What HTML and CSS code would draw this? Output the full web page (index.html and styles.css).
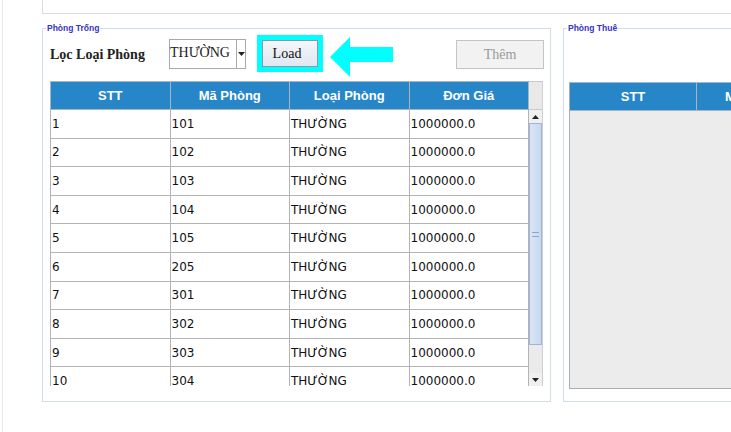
FILE: index.html
```html
<!DOCTYPE html>
<html lang="vi">
<head>
<meta charset="utf-8">
<title>Phòng</title>
<link rel="stylesheet" href="styles.css">
</head>
<body>
<div class="window">
  <div class="top-panel"></div>
  <div class="panels">
    <fieldset class="group group-left">
      <legend>Phòng Trống</legend>
      <div class="toolbar">
        <span class="filter-label">Lọc Loại Phòng</span>
        <div class="combo">
          <span class="combo-value">THƯỜNG</span>
          <span class="combo-btn"><svg width="7" height="4" viewBox="0 0 7 4"><path d="M0 0H7L3.5 4Z" fill="#222"/></svg></span>
        </div>
        <div class="load-focus"><button class="btn load">Load</button></div>
        <svg class="arrow" width="63" height="40" viewBox="0 0 63 40"><path d="M0 20L20 0V10H63V25H20V40Z" fill="#00ffff"/></svg>
        <button class="btn add" disabled>Thêm</button>
      </div>
      <div class="grid">
        <table class="data">
          <thead>
            <tr><th>STT</th><th>Mã Phòng</th><th>Loại Phòng</th><th>Đơn Giá</th></tr>
          </thead>
          <tbody>
            <tr><td>1</td><td>101</td><td>THƯỜNG</td><td>1000000.0</td></tr>
            <tr><td>2</td><td>102</td><td>THƯỜNG</td><td>1000000.0</td></tr>
            <tr><td>3</td><td>103</td><td>THƯỜNG</td><td>1000000.0</td></tr>
            <tr><td>4</td><td>104</td><td>THƯỜNG</td><td>1000000.0</td></tr>
            <tr><td>5</td><td>105</td><td>THƯỜNG</td><td>1000000.0</td></tr>
            <tr><td>6</td><td>205</td><td>THƯỜNG</td><td>1000000.0</td></tr>
            <tr><td>7</td><td>301</td><td>THƯỜNG</td><td>1000000.0</td></tr>
            <tr><td>8</td><td>302</td><td>THƯỜNG</td><td>1000000.0</td></tr>
            <tr><td>9</td><td>303</td><td>THƯỜNG</td><td>1000000.0</td></tr>
            <tr><td>10</td><td>304</td><td>THƯỜNG</td><td>1000000.0</td></tr>
          </tbody>
        </table>
        <div class="vscroll">
          <div class="vs-corner"></div>
          <div class="vs-btn"><svg width="7" height="4" viewBox="0 0 7 4"><path d="M0 4H7L3.5 0Z" fill="#222"/></svg></div>
          <div class="vs-thumb"><span class="grip"></span></div>
          <div class="vs-track"></div>
          <div class="vs-btn"><svg width="7" height="4" viewBox="0 0 7 4"><path d="M0 0H7L3.5 4Z" fill="#222"/></svg></div>
        </div>
      </div>
    </fieldset>
    <fieldset class="group group-right">
      <legend>Phòng Thuê</legend>
      <div class="grid grid-right">
        <table class="data data-empty">
          <thead>
            <tr><th class="col-stt">STT</th><th>Mã Phòng</th></tr>
          </thead>
        </table>
      </div>
    </fieldset>
  </div>
</div>
</body>
</html>
```

FILE: styles.css
```css
html, body {
  margin: 0;
  padding: 0;
  background: #ffffff;
}

body {
  width: 731px;
  height: 432px;
  overflow: hidden;
  font-family: "DejaVu Sans", sans-serif;
}

.window {
  height: 432px;
  margin-left: 2px;
  border-left: 1px solid #e6e8ea;
  overflow: hidden;
}

.top-panel {
  margin-left: 39px;
  height: 13px;
  border-left: 1px solid #d5dee7;
  border-bottom: 1px solid #d5dee7;
}

.panels {
  display: flex;
  align-items: flex-start;
  gap: 12px;
  margin-top: 8px;
  margin-left: 39px;
  width: 900px;
}

.group {
  margin: 0;
  border: 1px solid #d3dde6;
  padding: 0;
  min-width: 0;
  box-sizing: content-box;
}

.group legend {
  padding: 0 1px;
  font-family: "Liberation Sans", Arial, sans-serif;
  font-weight: bold;
  font-size: 8.5px;
  line-height: 12px;
  color: #3434c8;
}

.group-left {
  width: 500px;
  padding: 0 0 15px 7px;
}

.group-left legend {
  margin-left: -4px;
}

.group-right {
  width: 300px;
  padding: 0 0 12px 5px;
}

.group-right legend {
  margin-left: -2px;
}

.toolbar {
  display: flex;
  align-items: flex-start;
  height: 47px;
}

.filter-label {
  width: 119px;
  margin-top: 13px;
  font-family: "Liberation Serif", "Times New Roman", serif;
  font-weight: bold;
  font-size: 14px;
  color: #222;
  white-space: nowrap;
}

.combo {
  display: flex;
  margin-top: 5px;
  width: 77px;
  height: 30px;
  box-sizing: border-box;
  border: 1px solid #a9a9a9;
  background: #fff;
}

.combo-value {
  flex: 1;
  min-width: 0;
  overflow: hidden;
  font-family: "Liberation Serif", "Times New Roman", serif;
  font-size: 14px;
  line-height: 26px;
  color: #222;
  white-space: nowrap;
}

.combo-btn {
  width: 8px;
  flex: none;
  border-left: 1px solid #a9a9a9;
  display: flex;
  align-items: center;
  justify-content: center;
}

.load-focus {
  margin: 1px 0 0 11px;
  width: 66px;
  height: 37px;
  box-sizing: border-box;
  border: 5px solid #00ffff;
  display: flex;
}

.btn {
  font-family: "Liberation Serif", "Times New Roman", serif;
  font-size: 14px;
  padding: 0;
  margin: 0;
}

.load {
  width: 100%;
  height: 100%;
  padding-right: 6px;
  border: 1px solid #8d97a3;
  background: linear-gradient(#f4f7fb, #dfe7f1);
  color: #111;
}

.arrow {
  display: block;
  margin: 3px 0 0 7px;
  flex: none;
}

.add {
  margin: 6px 0 0 63px;
  width: 88px;
  height: 29px;
  border: 1px solid #c4c4c4;
  background: #f2f2f2;
  color: #9a9a9a;
}

.grid {
  display: flex;
  align-items: flex-start;
  height: 305px;
  width: 493px;
  overflow: hidden;
}

.grid-right {
  margin-top: 48px;
  height: 306px;
  width: 300px;
  background: #ececec;
  border-bottom: 1px solid #a9aeb4;
  border-left: 1px solid #a9aeb4;
}

.data {
  border-collapse: collapse;
  table-layout: fixed;
  width: 480px;
  font-size: 12px;
  color: #111;
}

.data th {
  height: 27px;
  padding: 0;
  background: #2686c8;
  color: #fff;
  font-family: "Liberation Sans", Arial, sans-serif;
  font-weight: bold;
  font-size: 13px;
  border: 1px solid #a6b5c4;
  border-left-color: #c9d9e6;
  text-align: center;
}

.data th:first-child {
  border-left-color: #a6b5c4;
}

.data td {
  height: 27.6px;
  padding: 0 0 0 1px;
  border: 1px solid #b3b3b3;
  background: #fff;
  white-space: nowrap;
  vertical-align: middle;
}

.data-empty {
  width: 246px;
}

.data-empty th:first-child {
  border-left: none;
}

.data-empty .col-stt {
  width: 126px;
}

.vscroll {
  width: 13px;
  height: 305px;
  flex: none;
  display: flex;
  flex-direction: column;
  background: #ececec;
  border-right: 1px solid #d0d0d0;
}

.vs-corner {
  height: 27px;
  background: #e9e9e9;
  border-top: 1px solid #c9c9c9;
  border-bottom: 1px solid #c9c9c9;
}

.vs-btn {
  height: 13px;
  display: flex;
  align-items: center;
  justify-content: center;
  background: #f0f0f0;
}

.vs-thumb {
  height: 222px;
  box-sizing: border-box;
  border: 1px solid #9fb5d8;
  background: linear-gradient(90deg, #d9e5f5, #c8d9f0);
  display: flex;
  align-items: center;
  justify-content: center;
}

.grip {
  width: 7px;
  height: 3px;
  border-top: 1px solid #8ea6cf;
  border-bottom: 1px solid #8ea6cf;
}

.vs-track {
  flex: 1;
  background: #ebebeb;
}
```
